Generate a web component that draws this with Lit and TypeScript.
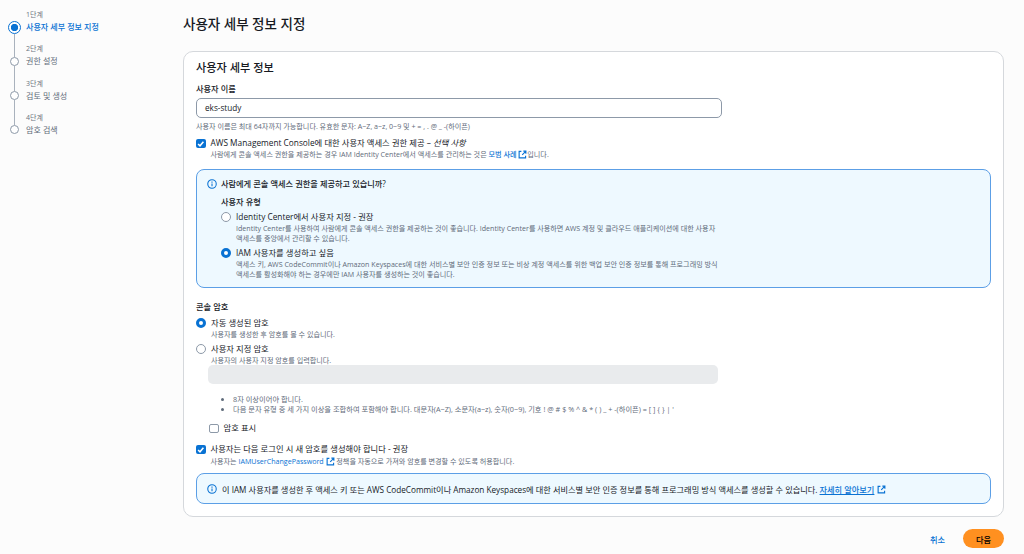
import { LitElement, css, html } from 'lit'
import { customElement } from 'lit/decorators.js'

const externalIcon = html`<svg class="ext" viewBox="0 0 16 16" fill="none" stroke="currentColor" stroke-width="2">
  <path d="M9.5 2H14v4.5M14 2L7.5 8.5M6 2.5H2v11.5h11.5V10" />
</svg>`

const infoIcon = html`<svg class="info-icon" viewBox="0 0 16 16" fill="none" stroke="currentColor" stroke-width="1.7">
  <circle cx="8" cy="8" r="6.8" />
  <path d="M8 7v4.6M8 4v1.8" />
</svg>`

const checkIcon = html`<svg viewBox="0 0 10 10" fill="none" stroke="#fff" stroke-width="1.6">
  <path d="M2.2 5.2L4.2 7.2L7.8 2.8" />
</svg>`

const steps = [
  { label: '1단계', title: '사용자 세부 정보 지정', active: true },
  { label: '2단계', title: '권한 설정', active: false },
  { label: '3단계', title: '검토 및 생성', active: false },
  { label: '4단계', title: '암호 검색', active: false },
]

@customElement('app-root')
export class AppRoot extends LitElement {
  private renderSteps() {
    return steps.map(
      (step, i) => html`
        <div class="step ${step.active ? 'active' : ''}">
          <div class="rail">
            <span class="dot"></span>
            ${i < steps.length - 1 ? html`<span class="line"></span>` : ''}
          </div>
          <div>
            <div class="step-label">${step.label}</div>
            <div class="step-title">${step.title}</div>
          </div>
        </div>
      `
    )
  }

  render() {
    return html`
      <nav class="sidebar">${this.renderSteps()}</nav>
      <main class="main">
        <h1>사용자 세부 정보 지정</h1>
        <section class="card">
          <h2>사용자 세부 정보</h2>
          <div class="label name-label">사용자 이름</div>
          <div class="input">eks-study</div>
          <div class="hint name-hint">사용자 이름은 최대 64자까지 가능합니다. 유효한 문자: A~Z, a~z, 0~9 및 + = , . @ _ -(하이픈)</div>

          <div class="option console-option">
            <span class="check on">${checkIcon}</span>
            <div>
              <div class="option-title">AWS Management Console에 대한 사용자 액세스 권한 제공 – <em>선택 사항</em></div>
              <div class="hint">사람에게 콘솔 액세스 권한을 제공하는 경우 IAM Identity Center에서 액세스를 관리하는 것은 <a>모범 사례</a> ${externalIcon}입니다.</div>
            </div>
          </div>

          <div class="info-box question">
            <div class="info-head">${infoIcon}<span>사람에게 콘솔 액세스 권한을 제공하고 있습니까?</span></div>
            <div class="user-type">
              <div class="label">사용자 유형</div>
              <div class="option type-option first">
                <span class="radio"></span>
                <div>
                  <div class="option-title">Identity Center에서 사용자 지정 - 권장</div>
                  <div class="hint">Identity Center를 사용하여 사람에게 콘솔 액세스 권한을 제공하는 것이 좋습니다. Identity Center를 사용하면 AWS 계정 및 클라우드 애플리케이션에 대한 사용자<br />액세스를 중앙에서 관리할 수 있습니다.</div>
                </div>
              </div>
              <div class="option type-option">
                <span class="radio on"></span>
                <div>
                  <div class="option-title">IAM 사용자를 생성하고 싶음</div>
                  <div class="hint">액세스 키, AWS CodeCommit이나 Amazon Keyspaces에 대한 서비스별 보안 인증 정보 또는 비상 계정 액세스를 위한 백업 보안 인증 정보를 통해 프로그래밍 방식<br />액세스를 활성화해야 하는 경우에만 IAM 사용자를 생성하는 것이 좋습니다.</div>
                </div>
              </div>
            </div>
          </div>

          <div class="label console-label">콘솔 암호</div>
          <div class="option auto-option">
            <span class="radio on"></span>
            <div>
              <div class="option-title">자동 생성된 암호</div>
              <div class="hint">사용자를 생성한 후 암호를 볼 수 있습니다.</div>
            </div>
          </div>
          <div class="option custom-option">
            <span class="radio"></span>
            <div class="grow">
              <div class="option-title">사용자 지정 암호</div>
              <div class="hint">사용자의 사용자 지정 암호를 입력합니다.</div>
            </div>
          </div>
          <div class="password-input"></div>
          <ul class="rules">
            <li>8자 이상이어야 합니다.</li>
            <li>다음 문자 유형 중 세 가지 이상을 조합하여 포함해야 합니다. 대문자(A~Z), 소문자(a~z), 숫자(0~9), 기호 ! @ # $ % ^ &amp; * ( ) _ + -(하이픈) = [ ] { } | '</li>
          </ul>
          <div class="option show-option">
            <span class="check"></span>
            <div class="option-title">암호 표시</div>
          </div>
          <div class="option reset-option">
            <span class="check on">${checkIcon}</span>
            <div>
              <div class="option-title">사용자는 다음 로그인 시 새 암호를 생성해야 합니다 - 권장</div>
              <div class="hint spaced">사용자는 <a>IAMUserChangePassword</a> ${externalIcon} 정책을 자동으로 가져와 암호를 변경할 수 있도록 허용합니다.</div>
            </div>
          </div>

          <div class="info-box notice">
            ${infoIcon}
            <span>이 IAM 사용자를 생성한 후 액세스 키 또는 AWS CodeCommit이나 Amazon Keyspaces에 대한 서비스별 보안 인증 정보를 통해 프로그래밍 방식 액세스를 생성할 수 있습니다. <a class="learn">자세히 알아보기</a> ${externalIcon}</span>
          </div>
        </section>
        <footer class="actions">
          <button class="cancel">취소</button>
          <button class="next">다음</button>
        </footer>
      </main>
    `
  }

  static styles = css`
    :host {
      display: grid;
      grid-template-columns: 183px 1fr;
      width: 1024px;
      height: 554px;
      overflow: hidden;
      background: #fcfcfc;
      color: #16191f;
      font-family: 'Open Sans', 'Noto Sans CJK KR', sans-serif;
    }

    * {
      box-sizing: border-box;
    }

    a {
      color: #0972d3;
      font-weight: 500;
    }

    /* sidebar */
    .sidebar {
      padding-top: 8px;
    }

    .step {
      display: flex;
      height: 34.33px;
    }

    .rail {
      display: flex;
      flex-direction: column;
      align-items: center;
      flex: none;
      width: 28px;
      margin-right: -2px;
      padding-top: 14.5px;
    }

    .dot {
      flex: none;
      width: 9px;
      height: 9px;
      border: 1px solid #8d99a8;
      border-radius: 50%;
      background: #fff;
    }

    .line {
      flex: none;
      width: 1px;
      height: 25px;
      background: #a9b2bd;
    }

    .step.active .rail {
      padding-top: 12.5px;
    }

    .step.active .dot {
      width: 13px;
      height: 13px;
      border: 1.5px solid #0972d3;
      background: radial-gradient(circle, #0972d3 0 3.4px, #fff 3.9px);
    }

    .step.active .line {
      height: 23px;
    }

    .step-label {
      font-size: 7px;
      line-height: 13px;
      color: #6b7480;
    }

    .step-title {
      font-size: 8.05px;
      line-height: 11px;
      color: #5f6b7a;
    }

    .step.active .step-title {
      color: #0972d3;
      font-weight: 500;
    }

    /* main column */
    .main {
      padding-right: 20px;
    }

    h1 {
      margin: 0;
      height: 51px;
      padding-top: 13px;
      font-size: 13.5px;
      line-height: 22px;
      font-weight: 500;
    }

    .card {
      height: 466px;
      padding: 8px 12px 0 12px;
      background: #fff;
      border: 1px solid #d5d8dc;
      border-radius: 10px;
    }

    h2 {
      margin: 0;
      font-size: 11.2px;
      line-height: 16px;
      font-weight: 500;
    }

    .label {
      font-size: 8.2px;
      line-height: 12px;
      font-weight: 500;
    }

    .name-label {
      margin-top: 7px;
    }

    .input {
      height: 20px;
      width: 526px;
      margin-top: 3px;
      padding-left: 8px;
      font-size: 8.2px;
      line-height: 18px;
      font-weight: 500;
      border: 1px solid #8d99a8;
      border-radius: 5px;
    }

    .hint {
      font-size: 7.1px;
      line-height: 10px;
      color: #5f6b7a;
    }

    .hint.spaced {
      margin-top: 1px;
    }

    .name-hint {
      margin-top: 3px;
    }

    .ext {
      width: 9px;
      height: 9px;
      color: #0972d3;
      vertical-align: -1.5px;
    }

    /* checkbox + radio rows */
    .option {
      display: flex;
      gap: 5px;
    }

    .option-title {
      font-size: 8.3px;
      line-height: 12px;
    }

    .option-title em {
      font-style: italic;
    }

    .grow {
      flex: 1;
    }

    .check {
      flex: none;
      display: block;
      width: 9.5px;
      height: 9.5px;
      margin-top: 1.5px;
      background: #fff;
      border: 1px solid #8d99a8;
      border-radius: 2px;
    }

    .check.on {
      background: #0972d3;
      border: none;
    }

    .check svg {
      display: block;
      width: 100%;
      height: 100%;
    }

    .radio {
      flex: none;
      width: 10px;
      height: 10px;
      margin-top: 1px;
      background: #fff;
      border: 1px solid #8d99a8;
      border-radius: 50%;
    }

    .radio.on {
      border: 3px solid #0972d3;
    }

    .console-option {
      margin-top: 6px;
    }

    /* blue info boxes */
    .info-box {
      background: #eef9ff;
      border: 1px solid #5c9fe6;
      border-radius: 8px;
    }

    .info-icon {
      flex: none;
      width: 10px;
      height: 10px;
      color: #0972d3;
    }

    .question {
      height: 119px;
      margin-top: 10px;
      padding: 8px 10px 0;
    }

    .info-head {
      display: flex;
      align-items: center;
      gap: 4px;
      font-size: 8.2px;
      line-height: 12px;
      font-weight: 500;
    }

    .user-type {
      margin-top: 6px;
      padding-left: 14px;
    }

    .type-option {
      margin-top: 4px;
    }

    .type-option.first {
      margin-top: 3px;
    }

    .console-label {
      margin-top: 13px;
    }

    .auto-option {
      margin-top: 4px;
    }

    .custom-option {
      margin-top: 4px;
    }

    .password-input {
      width: 510px;
      height: 19px;
      margin: 0 0 0 12px;
      background: #e9ebed;
      border-radius: 5px;
    }

    .rules {
      margin: 11px 0 0 12px;
      padding: 0 0 0 25px;
      font-size: 7.25px;
      line-height: 9.5px;
      color: #5f6b7a;
    }

    .show-option {
      margin: 8px 0 0 13px;
    }

    .reset-option {
      margin-top: 9px;
    }

    .notice {
      display: flex;
      align-items: center;
      gap: 5px;
      height: 31px;
      margin-top: 7px;
      padding: 0 10px;
      font-size: 8.2px;
    }

    .learn {
      text-decoration: underline;
    }

    /* footer */
    .actions {
      display: flex;
      justify-content: flex-end;
      align-items: center;
      gap: 18px;
      margin-top: 12px;
    }

    button {
      padding: 0;
      border: none;
      background: none;
      font: inherit;
      font-size: 8.2px;
      font-weight: 500;
    }

    .cancel {
      color: #0972d3;
    }

    .next {
      width: 41px;
      height: 19px;
      background: #ff9020;
      border-radius: 10px;
    }
  `
}

declare global {
  interface HTMLElementTagNameMap {
    'app-root': AppRoot
  }
}
